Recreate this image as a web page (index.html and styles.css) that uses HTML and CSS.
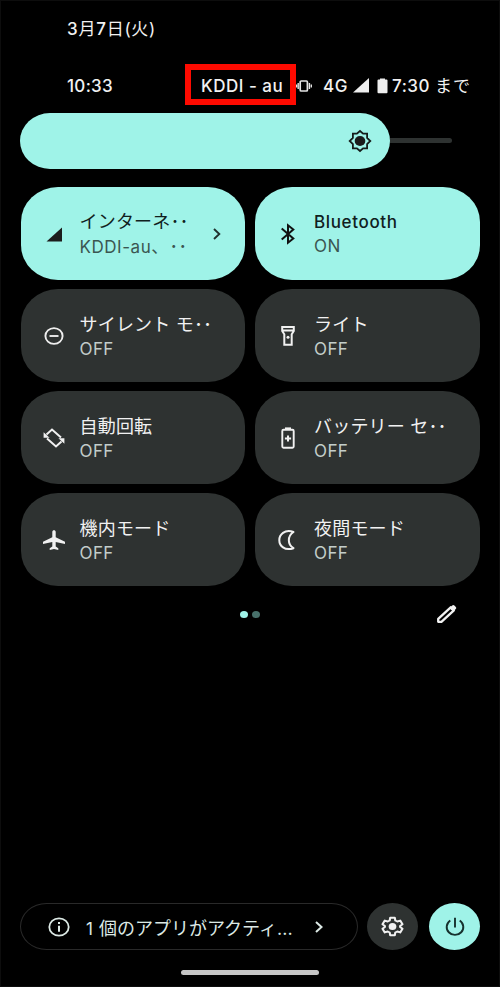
FILE: index.html
```html
<!DOCTYPE html>
<html lang="ja">
<head>
<meta charset="utf-8">
<title>クイック設定</title>
<link rel="stylesheet" href="styles.css">
</head>
<body>
<main class="panel">
  <header class="date"><i class="num">3</i>月<i class="num">7</i>日(火)</header>
  <div class="status">
    <span class="clock">10:33</span>
    <span class="carrier">KDDI - au</span>
    <svg class="vibrate" width="16" height="14" viewBox="0 0 16 14"><rect x="4.200" y="2" width="7.200" height="10" rx="1" fill="none" stroke="#e4e4e4" stroke-width="1.700"/><path d="M2.200 4v6M.5 5.500v3M13.400 4v6M15.300 5.500v3" stroke="#e4e4e4" stroke-width="1.400"/></svg>
    <span class="network">4G</span>
    <svg class="signal" width="16" height="15" viewBox="0 0 16 15"><path d="M0 14.500 16 0v14.500z" fill="#eee"/></svg>
    <svg class="charge" width="11" height="16" viewBox="0 0 11 16"><path d="M3 1.500V.5h5v1h1.500q1 0 1 1v11.700q0 1-1 1h-8q-1 0-1-1V2.500q0-1 1-1z" fill="#eee"/></svg>
    <span class="until">7:30 <i class="made">まで</i></span>
  </div>
  <div class="slider">
    <div class="fill"><svg width="24" height="24" viewBox="0 0 24 24"><path d="M12 2 15.100 4.700H19.100V8.900L22.300 12 19.100 15.100V19.300H15.100L12 22 8.900 19.300H4.900V15.100L1.700 12 4.900 8.900V4.700H8.900z" fill="none" stroke="#151d1b" stroke-width="1.800"/><ellipse cx="12" cy="12" rx="5.300" ry="5" fill="#1b1b1b"/></svg></div>
    <div class="track"></div>
  </div>

  <section class="tiles">
    <div class="tile on">
      <svg class="icon" viewBox="0 0 24 24"><path d="M4.500 19.500 20 5.500v14z" fill="#1c1c1c"/></svg>
      <div class="label"><b>インターネ<i class="dots">‥</i></b><span class="sub"><i class="net">KDDI-au</i><i class="comma">、</i><i class="dots">‥</i></span></div>
      <svg class="chevron" width="10" height="14" viewBox="0 0 10 14"><path d="m2 2 5.300 5L2 12" fill="none" stroke="#20312e" stroke-width="1.900"/></svg>
    </div>
    <div class="tile on">
      <svg class="icon" viewBox="0 0 24 24"><path d="m5.700 6.500 11.600 10-5.300 4.200V3.300l5.300 4.200-11.600 10" fill="none" stroke="#111" stroke-width="2"/></svg>
      <div class="label"><b class="bt">Bluetooth</b><span class="off">ON</span></div>
    </div>
    <div class="tile">
      <svg class="icon" viewBox="0 0 24 24"><ellipse cx="12" cy="12" rx="8.600" ry="7.900" fill="none" stroke="#eee" stroke-width="1.900"/><path d="M7.500 12h9" stroke="#eee" stroke-width="1.900"/></svg>
      <div class="label"><b>サイレント モ<i class="dots">‥</i></b><span class="off">OFF</span></div>
    </div>
    <div class="tile">
      <svg class="icon" viewBox="0 0 24 24"><g fill="none" stroke="#f1f1f1" stroke-width="2"><path d="M6.200 3h11.600v4L15.700 10.200v10.600H8.300V10.200L6.200 7zM6 6.500h12"/></g><circle cx="12" cy="13.200" r="1.500" fill="#f1f1f1"/></svg>
      <div class="label"><b>ライト</b><span class="off">OFF</span></div>
    </div>
    <div class="tile">
      <svg class="icon" viewBox="0 0 24 24"><g fill="none" stroke="#f1f1f1" stroke-width="2"><path d="M4.500 8.500 10 3.500l9 8M19.500 15.500l-5.500 5-9-8"/></g><path d="M1.600 6.200v5.600h6zM22.400 17.800v-5.600h-6z" fill="#f1f1f1"/></svg>
      <div class="label"><b>自動回転</b><span class="off">OFF</span></div>
    </div>
    <div class="tile">
      <svg class="icon" viewBox="0 0 24 24"><rect x="6.300" y="3.800" width="11.400" height="17.900" rx="1.200" fill="none" stroke="#f1f1f1" stroke-width="1.900"/><path d="M9 1.400h6V4H9z" fill="#f1f1f1"/><path d="M12 9.600v6M8.900 12.600h6.200" stroke="#f1f1f1" stroke-width="2"/></svg>
      <div class="label"><b>バッテリー セ<i class="dots">‥</i></b><span class="off">OFF</span></div>
    </div>
    <div class="tile">
      <svg class="icon" viewBox="0 0 24 24"><path d="M12 2.300c1 0 1.700.7 1.700 1.600V9.300L23 13.800V16l-9.300-1.900v4.500l2.600 1.700v1.700L12 21.100l-4.300.9v-1.700l2.600-1.700v-4.500L1 16v-2.200l9.300-4.500V3.900c0-.9.700-1.600 1.700-1.600z" fill="#f1f1f1"/></svg>
      <div class="label"><b>機内モード</b><span class="off">OFF</span></div>
    </div>
    <div class="tile">
      <svg class="icon" viewBox="0 0 24 24"><path d="M17.500 4C8.500 .9 3.300 6.800 3.300 12.200s5.200 11.100 14.200 8C11.300 16.500 11.300 8 17.500 4z" fill="none" stroke="#f1f1f1" stroke-width="2" stroke-linejoin="round"/></svg>
      <div class="label"><b>夜間モード</b><span class="off">OFF</span></div>
    </div>
  </section>

  <div class="pager">
    <span class="dot active"></span><span class="dot"></span>
    <svg class="edit" width="22" height="20" viewBox="0 0 22 20"><path d="M2.200 17.800v-3L14.700 3.300l3.200 3L5.400 17.800z" fill="none" stroke="#f1f1f1" stroke-width="2.300" stroke-linejoin="round"/><path d="m13.500 4.200 2.700-2.600q1.100-1 2.200 0l1.400 1.300q1 1 0 2l-2.800 2.700z" fill="#f1f1f1"/></svg>
  </div>

  <footer class="footer">
    <div class="apps">
      <svg width="24" height="22" viewBox="0 0 24 22"><ellipse cx="12" cy="11" rx="9.700" ry="8.700" fill="none" stroke="#dce9e5" stroke-width="1.800"/><path d="M12 9.700v6M12 6v2" stroke="#dce9e5" stroke-width="2"/></svg>
      <span class="apptext"><i class="one">1</i>個のアプリがアクティ<i class="more">...</i></span>
      <svg class="appchev" width="10" height="14" viewBox="0 0 10 14"><path d="m2 2 5.500 5L2 12" fill="none" stroke="#dce9e5" stroke-width="2"/></svg>
    </div>
    <div class="round"><svg width="25" height="23" viewBox="0 0 24 24" preserveAspectRatio="none"><path d="M9.800 2.800h4.400l.5 2.900 1.900 1.100 2.800-1 2.200 3.800-2.300 1.800v1.200l2.300 1.800-2.200 3.800-2.800-1-1.900 1.100-.5 2.900H9.800l-.5-2.900-1.900-1.100-2.800 1-2.200-3.800 2.300-1.800v-1.200L2.400 9.600l2.200-3.800 2.800 1 1.900-1.100z" fill="none" stroke="#f1f1f1" stroke-width="2" stroke-linejoin="round"/><circle cx="12" cy="12" r="3.700" fill="#f1f1f1"/></svg></div>
    <div class="round power"><svg width="24" height="24" viewBox="0 0 24 24"><path d="M7.300 5.500A8.300 7.900 0 1 0 16.700 5.500M12 2.700v9.800" fill="none" stroke="#16312d" stroke-width="1.900"/></svg></div>
  </footer>
  <div class="home"></div>
</main>
</body>
</html>
```
FILE: styles.css
```css
* { box-sizing: border-box; }
body { margin: 0; background: #000; }
i { font-style: normal; }
b { font-weight: 400; }
svg { display: block; flex: none; }
.panel {
  width: 500px;
  height: 987px;
  display: flex;
  flex-direction: column;
  background: #000;
  border: 1px solid #0d0d0d;
  color: #f1f1f1;
  font-family: Inter, "Noto Sans CJK JP", sans-serif;
  font-size: 17px;
  white-space: nowrap;
  overflow: hidden;
}
.date {
  height: 24px;
  margin: 16px 0 0 66px;
  line-height: 24px;
  letter-spacing: .75px;
}
.num { font-weight: 500; }
.status {
  height: 41px;
  margin: 23px 0 0 66px;
  display: flex;
  align-items: center;
  line-height: 24px;
}
.clock { width: 118px; padding-top: 2px; letter-spacing: .3px; font-weight: 500; }
.carrier {
  width: 111px;
  height: 41px;
  line-height: 32px;
  padding-left: 10px;
  border: 6px solid #fe0a00;
  letter-spacing: .5px;
  font-weight: 500;
}
.vibrate { margin-top: 2px; }
.network { width: 29px; margin-left: 11px; padding-top: 2px; letter-spacing: .5px; font-weight: 500; }
.signal { margin: 2px 0 0 1px; }
.charge { margin: 2px 0 0 8px; }
.until { margin-left: 4px; padding-top: 3px; letter-spacing: .5px; font-weight: 500; }
.made { font-weight: 400; letter-spacing: 1px; }
.slider {
  height: 56px;
  margin: 8px 0 0 19px;
  display: flex;
  align-items: center;
}
.fill {
  width: 370px;
  height: 56px;
  padding-right: 18px;
  display: flex;
  align-items: center;
  justify-content: flex-end;
  background: #9ff3e8;
  border-radius: 30px / 28px;
}
.track { width: 62px; height: 5px; margin-bottom: 1px; background: #2e3231; border-radius: 0 3px 3px 0; }
.tiles {
  margin: 18px 19px 0 19.500px;
  display: grid;
  grid-template-columns: repeat(2, 224.500px);
  grid-auto-rows: 93px;
  column-gap: 10px;
  row-gap: 9px;
}
.tile {
  padding-left: 21px;
  display: flex;
  align-items: center;
  background: #2e3231;
  border-radius: 37px / 35px;
}
.icon { width: 24px; height: 24px; }
.label { width: 134px; margin-left: 14px; padding-top: 3px; line-height: 24px; }
.label b, .label span { display: block; height: 24px; }
.label b { font-size: 18px; letter-spacing: .2px; }
.label span { color: #c3cdca; }
.label .off { letter-spacing: .4px; }
.on { background: #9ff3e8; color: #10201d; }
.on .label { padding-top: 1px; }
.on .label span { color: #3b5651; }
.on .label .sub { padding-top: 1px; }
.label .bt { font-size: 17px; font-weight: 500; letter-spacing: .65px; }
.net { letter-spacing: .55px; }
.comma { display: inline-block; width: 18px; }
.dots {
  display: inline-block;
  width: 18px;
  font-family: "Noto Sans CJK JP", sans-serif;
  font-size: 18px;
  font-weight: 700;
  line-height: 20px;
}
.chevron { margin-left: -2px; }
.pager {
  height: 24px;
  margin-top: 16px;
  display: flex;
  align-items: center;
  padding-left: 239px;
}
.dot { width: 8px; height: 7px; margin-right: 4px; border-radius: 50%; background: #47706a; }
.active { background: #9ff3e8; }
.edit { margin-left: 172px; }
.footer {
  margin: auto 19px 0;
  height: 47px;
  display: flex;
  align-items: center;
}
.apps {
  width: 338px;
  height: 47px;
  padding-left: 26px;
  display: flex;
  align-items: center;
  border: 1px solid #292929;
  border-radius: 27px / 24px;
  color: #dce9e5;
}
.apptext { width: 212px; margin-left: 14px; font-size: 18px; }
.one { display: inline-block; width: 14px; padding-left: 1px; font-size: 17px; }
.appchev { margin-left: 17px; }
.round {
  width: 51px;
  height: 47px;
  margin-left: 9px;
  display: flex;
  align-items: center;
  justify-content: center;
  background: #2e3231;
  border-radius: 50%;
}
.power { margin-left: 11px; background: #9ff3e8; }
.home {
  width: 138px;
  height: 5px;
  margin: 20px 0 11px 180px;
  border-radius: 3px;
  background: #c6c6c6;
}
```
